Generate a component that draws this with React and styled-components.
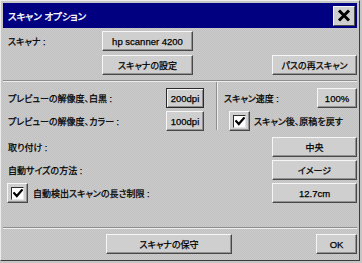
import React from "react";
import styled, { createGlobalStyle, css } from "styled-components";

const Global = createGlobalStyle`
  html, body { margin: 0; padding: 0; background: #c6c6c6; }
  body { font-family: "Liberation Sans", "Noto Sans CJK JP", sans-serif; }
`;

const texture = css`
  background: repeating-conic-gradient(#cbcbcb 0% 25%, #c1c1c1 0% 50%) 0 0 / 2px 2px;
`;

const Window = styled.div`
  width: 360px;
  height: 261px;
  box-sizing: border-box;
  border: 1px solid;
  border-color: #ececec #3c3c3c #3c3c3c #ececec;
  padding: 2px;
  ${texture};
  display: flex;
  flex-direction: column;
  font-family: "Liberation Sans", "Noto Sans CJK JP", sans-serif;
  font-feature-settings: "palt";
  font-size: 9px;
  color: #000;
  -webkit-text-stroke: 0.25px #000;
`;

const TitleBar = styled.div`
  height: 25px;
  flex: none;
  background: #000080;
  display: flex;
  align-items: center;
  justify-content: space-between;
  padding: 0 2px 0 5px;
`;

const Title = styled.span`
  color: #fff;
  -webkit-text-stroke: 0.35px #fff;
  font-size: 9.5px;
`;

const CloseButton = styled.button`
  width: 22px;
  height: 20px;
  box-sizing: border-box;
  padding: 0;
  margin: 0;
  background: #cfcfcf;
  border: 1px solid;
  border-color: #f6f6f6 #4a4a4a #4a4a4a #f6f6f6;
  display: flex;
  align-items: center;
  justify-content: center;
`;

const Section = styled.div`
  display: flex;
  flex-direction: column;
  gap: ${(p) => p.$gap ?? 3}px;
  padding: ${(p) => p.$top ?? 0}px 0 0 5px;
`;

const Row = styled.div`
  display: flex;
  align-items: center;
  height: 20px;
`;

const Label = styled.span`
  flex: none;
  width: ${(p) => (p.$w ? `${p.$w}px` : "auto")};
  white-space: nowrap;
`;

const Button = styled.button`
  flex: none;
  width: ${(p) => p.$w}px;
  height: 20px;
  box-sizing: border-box;
  padding: 0;
  margin: 0 0 0 ${(p) => (p.$ml === "auto" ? "auto" : `${p.$ml ?? 0}px`)};
  background: #cfcfcf;
  border: 1px solid;
  border-color: #f6f6f6 #484848 #484848 #f6f6f6;
  box-shadow: inset -1px -1px 0 #929292;
  font-family: inherit;
  font-size: ${(p) => (p.$latin ? "9.5px" : "9px")};
  font-feature-settings: "palt";
  color: #000;
  white-space: nowrap;
  display: flex;
  align-items: center;
  justify-content: center;
  ${(p) =>
    p.$default &&
    css`
      border-color: #2a2a2a;
      box-shadow: inset 1px 1px 0 #f4f4f4, inset -1px -1px 0 #8a8a8a;
    `}
`;

const HSep = styled.div`
  flex: none;
  height: 0;
  border-top: 1px solid #8e8e8e;
  border-bottom: 1px solid #ededed;
  margin-top: ${(p) => p.$mt ?? 0}px;
`;

const Split = styled.div`
  display: flex;
  height: 50px;
`;

const LeftCol = styled.div`
  width: 208px;
  flex: none;
  padding: 6px 0 0 5px;
  display: flex;
  flex-direction: column;
  gap: 3px;
`;

const VSep = styled.div`
  width: 0;
  flex: none;
  border-left: 1px solid #8e8e8e;
  border-right: 1px solid #ededed;
  height: 48px;
`;

const RightCol = styled.div`
  flex: 1;
  padding: 6px 0 0 6px;
  display: flex;
  flex-direction: column;
  gap: 3px;
`;

const CheckFrame = styled.span`
  flex: none;
  width: 21px;
  height: 20px;
  box-sizing: border-box;
  margin-left: ${(p) => p.$ml ?? 0}px;
  margin-right: ${(p) => p.$mr ?? 5}px;
  background: #cfcfcf;
  border: 1px solid;
  border-color: #f6f6f6 #484848 #484848 #f6f6f6;
  box-shadow: inset -1px -1px 0 #929292;
  display: flex;
  align-items: center;
  justify-content: center;
`;

const CheckBox = styled.span`
  width: 13px;
  height: 13px;
  box-sizing: border-box;
  background: #fff;
  border: 1px solid;
  border-color: #2e2e2e #e4e4e4 #e4e4e4 #2e2e2e;
  display: flex;
  align-items: center;
  justify-content: center;
`;

const BottomRow = styled.div`
  display: flex;
  align-items: center;
  padding: 5px 0 0 5px;
`;

const Check = ({ ml, mr }) => (
  <CheckFrame $ml={ml} $mr={mr}>
    <CheckBox>
      <svg width="10" height="9" viewBox="0 0 10 9">
        <path d="M1.2 4.2 L3.8 7 L8.8 1.2" fill="none" stroke="#000" strokeWidth="2.2" strokeLinecap="square" />
      </svg>
    </CheckBox>
  </CheckFrame>
);

export default function App() {
  return (
    <>
      <Global />
      <Window>
        <TitleBar>
          <Title>スキャン オプション</Title>
          <CloseButton>
            <svg width="14" height="13" viewBox="0 0 14 13">
              <path d="M2 1.5 L12 11.5 M12 1.5 L2 11.5" stroke="#000" strokeWidth="3" strokeLinecap="butt" />
            </svg>
          </CloseButton>
        </TitleBar>

        <Section $top={3} $gap={4}>
          <Row>
            <Label $w={94}>スキャナ :</Label>
            <Button $w={91} $latin>hp scanner 4200</Button>
          </Row>
          <Row>
            <Button $w={91} $ml={94}>スキャナの設定</Button>
            <Button $w={85} $ml="auto">パスの再スキャン</Button>
          </Row>
        </Section>

        <HSep $mt={5} />

        <Split>
          <LeftCol>
            <Row>
              <Label $w={158}>プレビューの解像度、白黒 :</Label>
              <Button $w={38} $latin $default>200dpi</Button>
            </Row>
            <Row>
              <Label $w={158}>プレビューの解像度、カラー :</Label>
              <Button $w={38} $latin>100dpi</Button>
            </Row>
          </LeftCol>
          <VSep />
          <RightCol>
            <Row>
              <Label>スキャン速度 :</Label>
              <Button $w={40} $ml="auto" $latin>100%</Button>
            </Row>
            <Row>
              <Check ml={5} mr={4} />
              <Label>スキャン後、原稿を戻す</Label>
            </Row>
          </RightCol>
        </Split>

        <Section $top={5}>
          <Row>
            <Label>取り付け :</Label>
            <Button $w={85} $ml="auto">中央</Button>
          </Row>
          <Row>
            <Label>自動サイズの方法 :</Label>
            <Button $w={85} $ml="auto">イメージ</Button>
          </Row>
          <Row>
            <Check ml={-1} mr={5} />
            <Label>自動検出スキャンの長さ制限 :</Label>
            <Button $w={85} $ml="auto" $latin>12.7cm</Button>
          </Row>
        </Section>

        <HSep $mt={24} />

        <BottomRow>
          <Button $w={126} $ml={98}>スキャナの保守</Button>
          <Button $w={41} $ml="auto" $latin>OK</Button>
        </BottomRow>
      </Window>
    </>
  );
}
